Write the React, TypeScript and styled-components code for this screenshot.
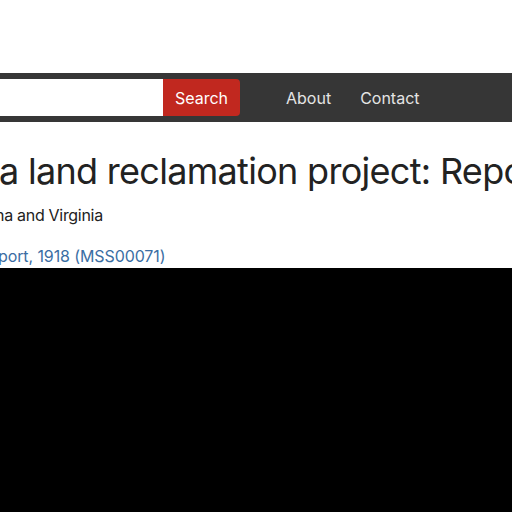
import React from "react";
import styled, { createGlobalStyle } from "styled-components";

const Global = createGlobalStyle`
  html, body { margin: 0; padding: 0; background: #000; }
  body { font-family: Inter, "Noto Sans", "Liberation Sans", sans-serif; overflow: hidden; }
`;

const Page = styled.div`
  width: 512px;
  background: #fff;
  overflow: hidden;
  padding-top: 73px;
`;

const Bar = styled.header`
  height: 49px;
  background: #363636;
  display: flex;
  align-items: center;
  box-sizing: border-box;
`;

const SearchForm = styled.form`
  display: flex;
  height: 37px;
  margin: 0;
`;

const Input = styled.input`
  width: 163px;
  height: 37px;
  border: none;
  margin: 0;
  padding: 0 8px;
  box-sizing: border-box;
  background: #fff;
  outline: none;
`;

const Button = styled.button`
  width: 77px;
  height: 37px;
  border: none;
  border-radius: 0 4px 4px 0;
  background: #c1281f;
  color: #fff;
  font-family: Inter, "Noto Sans", sans-serif;
  font-size: 16px;
  padding: 0;
  cursor: pointer;
`;

const Nav = styled.nav`
  display: flex;
  gap: 29px;
  margin-left: 46px;
`;

const NavLink = styled.a`
  color: #e4e4e4;
  font-size: 16px;
  text-decoration: none;
`;

const Main = styled.main`
  padding: 27px 0 0 0;
  white-space: nowrap;
`;

const Title = styled.h1<{ shift: number }>`
  margin: 0 0 0 ${(p) => p.shift}px;
  font-size: 36px;
  font-weight: 400;
  line-height: 44px;
  letter-spacing: -0.7px;
  color: #222;
`;

const Sub = styled.p<{ shift: number }>`
  margin: 10px 0 0 ${(p) => p.shift}px;
  font-size: 16px;
  line-height: 24px;
  letter-spacing: -0.3px;
  color: #222;
`;

const Link = styled.a<{ shift: number }>`
  display: block;
  margin: 18px 0 0 ${(p) => p.shift}px;
  font-size: 16px;
  line-height: 23px;
  letter-spacing: -0.1px;
  color: #3b6ea3;
  text-decoration: none;
`;

export default function App() {
  return (
    <>
      <Global />
      <Page>
        <Bar>
          <SearchForm onSubmit={(e) => e.preventDefault()}>
            <Input type="text" aria-label="Search" />
            <Button type="submit">Search</Button>
          </SearchForm>
          <Nav>
            <NavLink href="#">About</NavLink>
            <NavLink href="#">Contact</NavLink>
          </Nav>
        </Bar>
        <Main>
          <Title shift={-1}>a land reclamation project: Report</Title>
          <Sub shift={-5}>na and Virginia</Sub>
          <Link shift={-2} href="#">port, 1918 (MSS00071)</Link>
        </Main>
      </Page>
    </>
  );
}
